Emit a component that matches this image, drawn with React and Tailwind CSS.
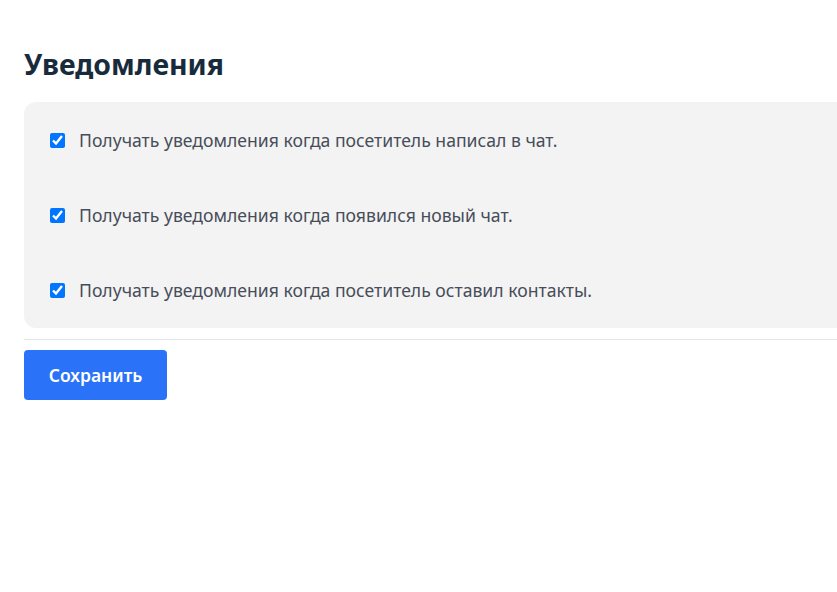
export default function App() {
  return (
    <div className="w-[837px] h-[592px] overflow-hidden bg-white font-['Noto_Sans',sans-serif]">
      <div className="pl-6 pt-[44px] mr-[-40px]">
        <h2 className="text-[28.4px] leading-[40px] font-bold text-[#182b3c]">Уведомления</h2>
        <div className="mt-[18px] rounded-l-[12px] bg-[#f3f3f3] py-[0.5px]">
          {[
            "Получать уведомления когда посетитель написал в чат.",
            "Получать уведомления когда появился новый чат.",
            "Получать уведомления когда посетитель оставил контакты.",
          ].map((t) => (
            <label key={t} className="flex h-[75px] items-center pl-[26px]">
              <input
                type="checkbox"
                defaultChecked
                className="m-0 h-[15px] w-[15px] accent-[#0075ff]"
              />
              <span className="ml-[14px] text-[17.6px] text-[#474d59]">{t}</span>
            </label>
          ))}
        </div>
        <div className="mt-[11px] border-t border-[#e3e7ea]"></div>
        <button className="mt-[10px] h-[50px] w-[143px] rounded-[4px] bg-[#2a73f8] text-[17.5px] font-semibold text-white">
          Сохранить
        </button>
      </div>
    </div>
  );
}
